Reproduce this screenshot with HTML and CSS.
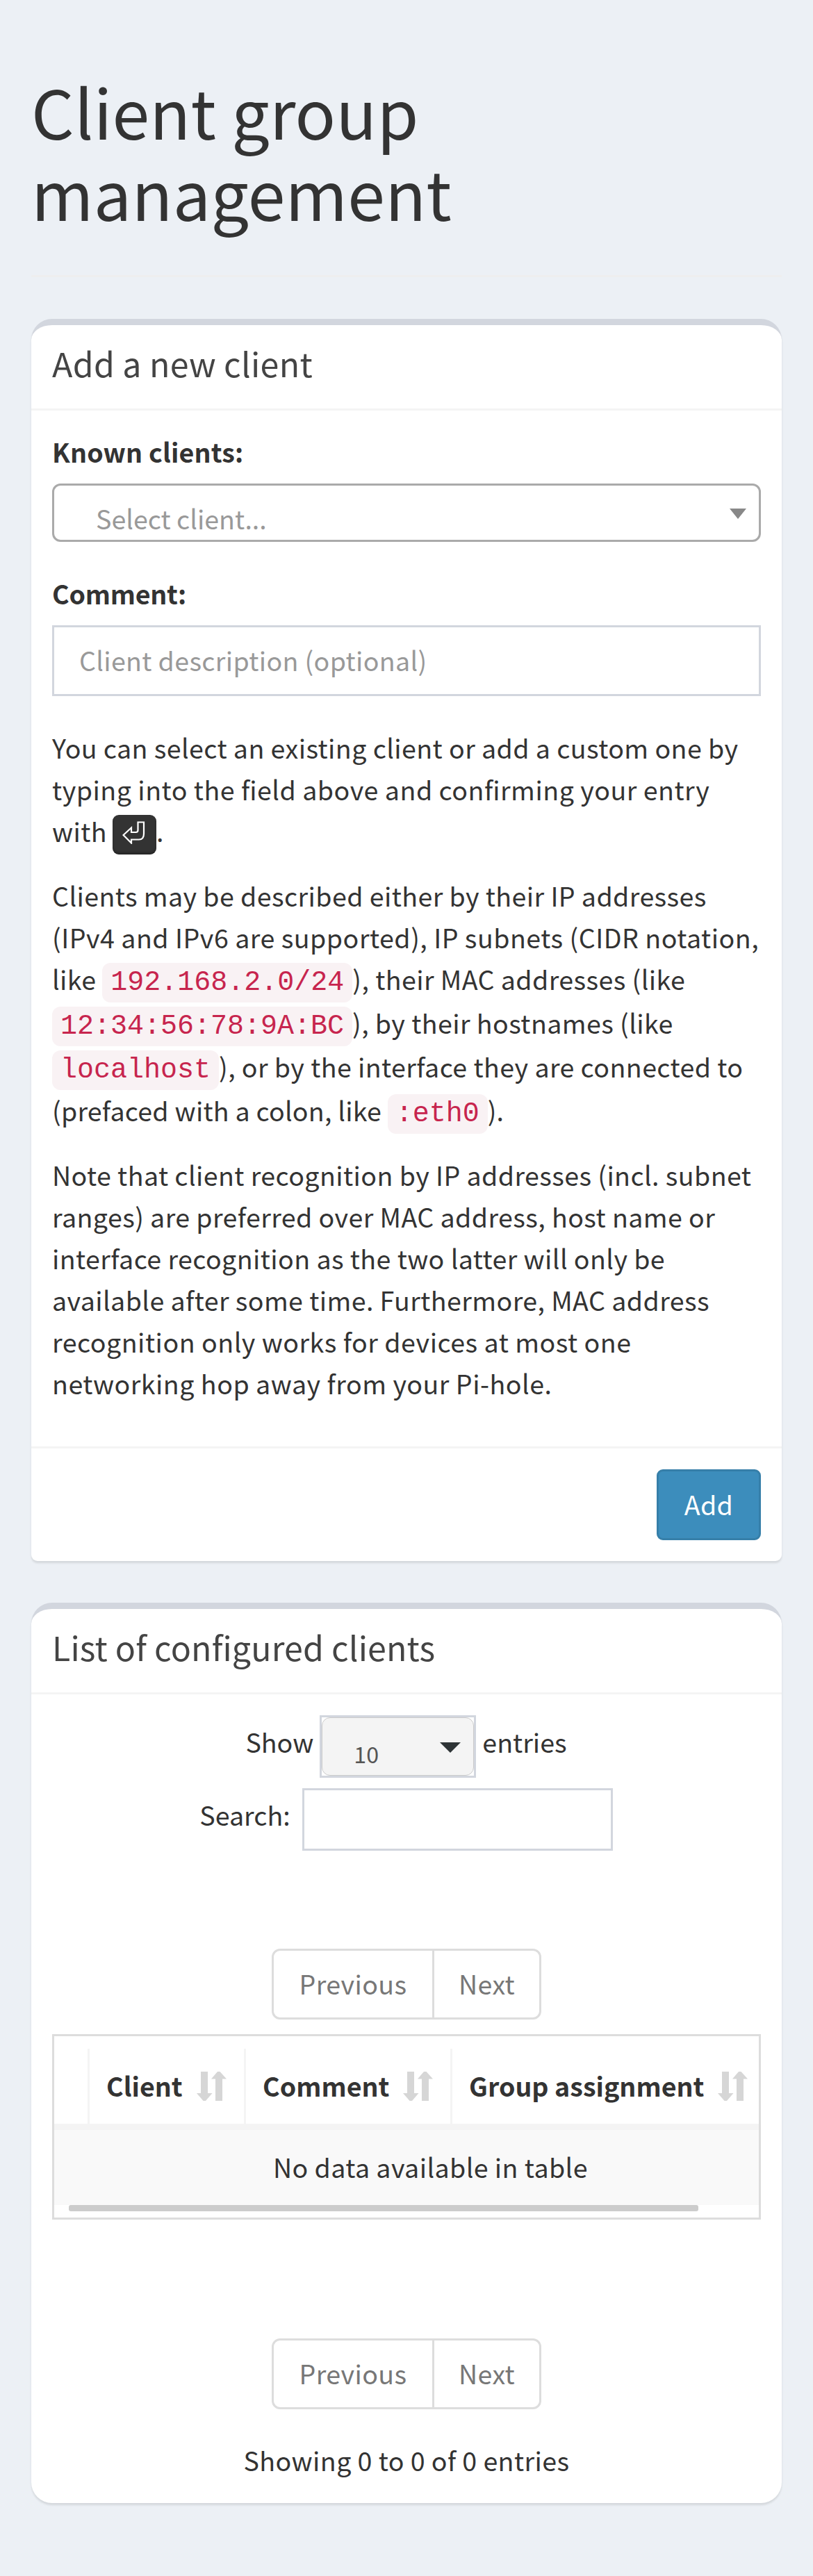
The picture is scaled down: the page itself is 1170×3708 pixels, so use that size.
FILE: index.html
```
<!DOCTYPE html>
<html lang="en">
<head>
<meta charset="utf-8">
<title>Client group management</title>
<link rel="stylesheet" href="styles.css">
</head>
<body>
<svg class="defs" aria-hidden="true">
  <symbol id="sort" viewBox="0 0 43 42"><path d="M6 0h10v31h6.500L13 42H9.500L0 31h6zM27 42h10V10.500h6L33.500 0H30l-9 10.500h6z"/></symbol>
</svg>
<main class="content">
  <h1 class="page-title">Client group<br>management</h1>
  <hr class="rule">

  <section class="box box-add">
    <header class="box-header"><h3 class="box-title">Add a new client</h3></header>
    <div class="box-body">
      <label class="label">Known clients:</label>
      <div class="select2"><span>Select client...</span><i class="caret"></i></div>
      <label class="label label-comment" for="comment">Comment:</label>
      <input class="field" id="comment" type="text" placeholder="Client description (optional)">
      <div class="help">
        <p class="intro">You can select an existing client or add a custom one by<br><span class="loose">typing into the field above and confirming your entry</span><br>with <kbd><svg class="enter" viewBox="0 0 33 33"><path d="M22.500 1.500H31V18Q31 26.500 24 26.500H13V31.500L1.500 20L13 9.500V16H19.500Q22.500 16 22.500 13z"/></svg></kbd>.</p>
        <p>Clients may be described either by their IP addresses<br><span class="loose">(IPv4 and IPv6 are supported), IP subnets (CIDR notation,</span><br>like <code>192.168.2.0/24</code>), their MAC addresses (like<br><code>12:34:56:78:9A:BC</code>), by their hostnames (like<br><code>localhost</code>), or by the interface they are connected to<br><span class="tight">(prefaced with a colon, like <code>:eth0</code>).</span></p>
        <p>Note that client recognition by IP addresses (incl. subnet<br>ranges) are preferred over MAC address, host name or<br>interface recognition as the two latter will only be<br>available after some time. Furthermore, MAC address<br><span class="loose">recognition only works for devices at most one<br>networking hop away from your Pi-hole.</span></p>
      </div>
    </div>
    <footer class="box-footer"><button class="btn" type="button">Add</button></footer>
  </section>

  <section class="box box-list">
    <header class="box-header"><h3 class="box-title">List of configured clients</h3></header>
    <div class="list-body">
      <div class="length"><span>Show</span><div class="length-select"><div class="length-inner"><span>10</span><i class="caret caret-dark"></i></div></div><span>entries</span></div>
      <div class="search"><label for="search">Search:</label><input id="search" class="search-input" type="search"></div>
      <div class="pager"><span>Previous</span><span>Next</span></div>
      <div class="table">
        <div class="thead">
          <div class="th th-empty"></div>
          <div class="th th-client">Client<svg class="sort"><use href="#sort"/></svg></div>
          <div class="th th-comment">Comment<svg class="sort"><use href="#sort"/></svg></div>
          <div class="th th-group">Group assignment<svg class="sort"><use href="#sort"/></svg></div>
        </div>
        <div class="empty-row">No data available in table</div>
        <div class="scrollbar"></div>
      </div>
      <div class="pager pager-bottom"><span>Previous</span><span>Next</span></div>
      <div class="info">Showing 0 to 0 of 0 entries</div>
    </div>
  </section>
</main>
</body>
</html>
```
FILE: styles.css
```
* { box-sizing: border-box; }
body {
  margin: 0;
  min-height: 3708px;
  background: #ecf0f5;
  color: #333;
  font: 400 37.6px/60px "Noto Sans CJK SC", "Noto Sans", sans-serif;
  font-feature-settings: "liga" 1;
}
.defs { display: none; }
.content { padding: 101px 45px 0; }
.page-title {
  margin: 0;
  height: 295px;
  font-size: 96.7px;
  line-height: 117px;
  letter-spacing: .25px;
  font-weight: 400;
}
.rule { margin: 0 0 60px; border: 0; border-top: 3px solid #eee; }

.box {
  background: #fff;
  border-top: 9px solid #d2d6de;
  border-radius: 30px;
  box-shadow: 0 3px 3px rgba(0, 0, 0, .1);
}
.box-add {
  height: 1788px;
  margin-bottom: 60px;
  border-radius: 30px 30px 9px 9px;
}
.box-list { height: 1296px; }
.box-header { height: 123px; padding: 27px 30px 0; border-bottom: 3px solid #f4f4f4; }
.box-title { margin: 0; font-size: 48.3px; line-height: 54px; letter-spacing: .15px; font-weight: 400; color: #444; }
.box-add .box-title { letter-spacing: .3px; }
.box-body { height: 1491px; padding: 29px 30px 0; }

.label { display: block; height: 76px; font-weight: 700; letter-spacing: .15px; }
.label-comment { margin-top: 44px; letter-spacing: -.25px; }
.select2 {
  display: flex;
  justify-content: space-between;
  align-items: flex-start;
  height: 84px;
  padding: 17px 18px 0 60px;
  border: 3px solid #aaa;
  border-radius: 12px;
  color: #999;
}
.caret {
  margin-top: 16px;
  border: solid transparent;
  border-width: 15px 12px 0;
  border-top-color: #888;
}
.field {
  display: block;
  width: 100%;
  height: 102px;
  padding: 0 36px 3px;
  border: 3px solid #d2d6de;
  border-radius: 0;
  background: #fff;
  font: inherit;
  letter-spacing: .33px;
}
.field::placeholder { color: #999; opacity: 1; }
.help { padding-top: 44px; letter-spacing: .41px; }
.help p { margin: 0 0 30px; white-space: nowrap; }
.help .intro { margin-bottom: 33px; }
.loose { letter-spacing: .49px; }
.tight { letter-spacing: .22px; }
kbd {
  display: inline-flex;
  width: 63px;
  height: 57px;
  margin: -10px 0 -10px -1px;
  padding: 9px 14px;
  vertical-align: -3px;
  border-radius: 9px;
  background: #333;
  box-shadow: inset 0 -3px 3px rgba(0, 0, 0, .25);
}
.enter { flex: none; width: 33px; height: 33px; fill: none; stroke: #fff; stroke-width: 2.2; }
code {
  padding: 6px 12px;
  border-radius: 12px;
  background: #f9f2f4;
  color: #c7254e;
  font: 40px/54px "Liberation Mono", monospace;
  letter-spacing: 0;
}
.box-footer {
  display: flex;
  justify-content: flex-end;
  height: 165px;
  padding: 30px;
  border-top: 3px solid #f4f4f4;
}
.btn {
  width: 150px;
  height: 102px;
  padding: 0 0 3px;
  border: 3px solid #367fa9;
  border-radius: 9px;
  background: #3c8dbc;
  color: #fff;
  font: inherit;
  letter-spacing: .4px;
}

.list-body { padding: 30px; }
.length, .search { display: flex; justify-content: center; height: 90px; line-height: 60px; }
.length { gap: 9px; padding-right: 1px; }
.length > span { padding-top: 8px; }
.length-select { width: 225px; border: 3px solid #d2d6de; }
.length-inner {
  display: flex;
  justify-content: space-between;
  height: 84px;
  padding: 24px 18px 0 45px;
  border: 1px solid #ccc;
  border-radius: 12px;
  background: #f4f4f4;
  color: #555;
  font-size: 32.2px;
  line-height: 54px;
}
.caret-dark { margin-top: 11px; border-width: 15px 15px 0; border-top-color: #2e3436; height: 0; }
.search { gap: 17px; margin: 15px 0 141px; padding-right: 1px; }
.search label { padding-top: 8px; }
.search-input { width: 447px; height: 90px; border: 3px solid #d2d6de; background: #fff; }
.pager {
  display: flex;
  width: 388px;
  height: 102px;
  margin: 0 auto 21px;
  border: 3px solid #ddd;
  border-radius: 12px;
  color: #777;
  line-height: 93px;
  letter-spacing: .35px;
}
.pager span { flex: 1; text-align: center; }
.pager span:first-child { flex: 0 0 231px; border-right: 3px solid #ddd; }
.table { height: 267px; border: 3px solid #ddd; overflow: hidden; }
.thead { display: flex; height: 135px; padding-top: 18px; border-bottom: 9px solid #f4f4f4; }
.th {
  display: flex;
  justify-content: space-between;
  align-items: flex-start;
  padding: 23px 25px 0 24px;
  border-right: 3px solid #f4f4f4;
  font-weight: 700;
  white-space: nowrap;
}
.th-empty { width: 51px; padding: 0; }
.th-client { width: 225px; }
.th-comment { width: 297px; }
.th-group { flex: 1; padding-right: 16px; border: 0; }
.sort { width: 43px; height: 42px; margin-top: 10px; fill: #d6d6d6; }
.empty-row { height: 108px; padding: 23px 0 0 315px; background: #f9f9f9; white-space: nowrap; letter-spacing: .41px; }
.scrollbar { width: 906px; height: 9px; margin-left: 21px; border-radius: 3px; background: #ccc; }
.pager-bottom { margin: 171px auto 43px; }
.info { text-align: center; letter-spacing: .4px; }
```
